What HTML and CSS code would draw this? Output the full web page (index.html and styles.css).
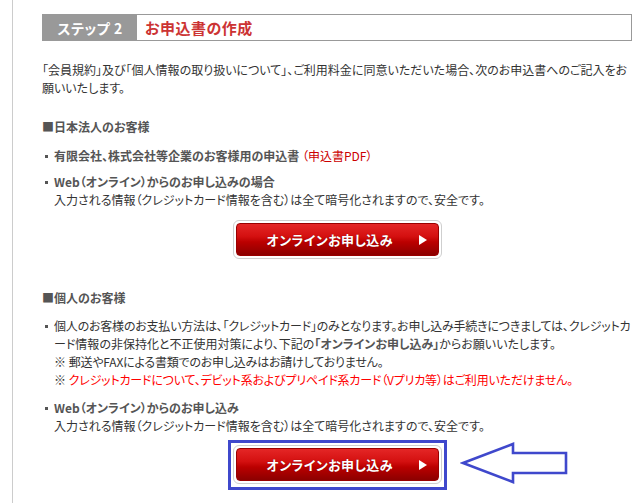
FILE: index.html
```html
<!DOCTYPE html>
<html lang="ja">
<head>
<meta charset="utf-8">
<title>お申込書の作成</title>
<link rel="stylesheet" href="styles.css">
</head>
<body>
<div class="page">
  <div class="step-header">
    <div class="step-label">ステップ 2</div>
    <div class="step-title">お申込書の作成</div>
  </div>

  <p class="intro">「会員規約」及び「個人情報の取り扱いについて」、ご利用料金に同意いただいた場合、次のお申込書へのご記入をお<br>願いいたします。</p>

  <h3 class="sec-title sec-corp">■日本法人のお客様</h3>
  <ul class="items">
    <li><b>有限会社、株式会社等企業のお客様用の申込書</b> <span class="pdf">（申込書PDF）</span></li>
    <li class="gap"><b>Web（オンライン）からのお申し込みの場合</b><br>入力される情報（クレジットカード情報を含む）は全て暗号化されますので、安全です。</li>
  </ul>
  <div class="btn-row btn-row-corp">
    <a class="btn"><span class="btn-face"><span class="btn-text">オンラインお申し込み</span><span class="tri"></span></span></a>
  </div>

  <h3 class="sec-title sec-person">■個人のお客様</h3>
  <ul class="items">
    <li><span class="tight">個人のお客様のお支払い方法は、「クレジットカード」のみとなります。お申し込み手続きにつきましては、クレジットカ</span><br>ード情報の非保持化と不正使用対策により、下記の<b>「オンラインお申し込み」</b>からお願いいたします。<br>※ <span class="tight">郵送やFAXによる書類でのお申し込みはお請けしておりません。</span><br>※ <span class="warn tight">クレジットカードについて、デビット系およびプリペイド系カード（Vプリカ等）はご利用いただけません。</span></li>
    <li class="gap"><b>Web（オンライン）からのお申し込み</b><br>入力される情報（クレジットカード情報を含む）は全て暗号化されますので、安全です。</li>
  </ul>
  <div class="btn-row btn-row-person">
    <div class="highlight">
      <a class="btn"><span class="btn-face"><span class="btn-text">オンラインお申し込み</span><span class="tri"></span></span></a>
    </div>
    <svg class="arrow" width="112" height="44" viewBox="0 0 112 44">
      <polygon points="3,21 53,2 53,11 106,11 106,31 53,31 53,40" fill="#fff" stroke="#3f48cc" stroke-width="2.6" stroke-linejoin="miter"/>
    </svg>
  </div>
</div>
</body>
</html>
```

FILE: styles.css
```css
html, body {
  margin: 0;
  padding: 0;
  background: #fff;
}
body {
  font-family: "Noto Sans CJK JP", "Noto Sans", sans-serif;
  font-size: 12px;
  line-height: 18px;
  color: #333;
  font-feature-settings: "palt";
}
.page {
  margin-left: 12px;
  border-left: 1px solid #ccc;
  padding: 14px 11px 0 29px;
  min-height: 503px;
  box-sizing: border-box;
}
.step-header {
  display: flex;
  height: 27px;
  box-sizing: border-box;
  border: 1px solid #999;
}
.step-label {
  width: 94px;
  background: #999;
  color: #fff;
  font-weight: bold;
  font-size: 14px;
  display: flex;
  align-items: center;
  justify-content: center;
  letter-spacing: 0.5px;
}
.step-title {
  color: #cc3333;
  font-weight: bold;
  font-size: 15px;
  display: flex;
  align-items: center;
  padding-left: 8px;
  letter-spacing: 0.5px;
}
.intro {
  margin: 20px 0 0;
}
.sec-title {
  margin: 0;
  font-size: 12px;
  font-weight: bold;
  color: #555;
}
.sec-corp { margin-top: 21px; }
.sec-person { margin-top: 30px; }
.items {
  list-style: none;
  margin: 11px 0 0;
  padding: 0;
}
.sec-person + .items { margin-top: 10px; }
.items li {
  padding-left: 12px;
  white-space: nowrap;
}
.items li::before {
  content: "";
  display: inline-block;
  width: 3px;
  height: 3px;
  background: #555;
  margin-left: -9px;
  margin-right: 6px;
  vertical-align: 3px;
}
.items li.gap { margin-top: 8px; }
.sec-person + .items li.gap { margin-top: 10px; }
.items b {
  color: #555;
}
.tight {
  letter-spacing: -0.2px;
}
.pdf {
  color: #cc0000;
}
.warn {
  color: #ff0000;
}
.btn-row {
  display: flex;
  justify-content: center;
}
.btn-row-corp { margin-top: 11px; }
.btn-row-person {
  margin-top: 5px;
  position: relative;
}
.highlight {
  border: 3px solid #3f48cc;
  padding: 2px 2px 3px;
}
.btn {
  display: block;
  width: 209px;
  height: 39px;
  box-sizing: border-box;
  border: 1px solid #cfcfcf;
  border-radius: 6px;
  padding: 2px;
  background: #fff;
}
.btn-face {
  display: flex;
  align-items: center;
  justify-content: space-between;
  height: 100%;
  box-sizing: border-box;
  border: 1px solid #9a0000;
  border-radius: 4px;
  background: linear-gradient(to bottom, #e42626 0%, #d41010 40%, #bb0000 58%, #8c0000 100%);
  padding: 0 11px 0 30px;
  color: #fff;
  font-weight: bold;
  font-size: 13px;
  letter-spacing: 0.4px;
  text-shadow: 0 0 1px #700;
}
.tri {
  width: 0;
  height: 0;
  border-left: 8px solid #fff;
  border-top: 5px solid transparent;
  border-bottom: 5px solid transparent;
}
.arrow {
  position: absolute;
  left: 418px;
  top: 2px;
}
```
